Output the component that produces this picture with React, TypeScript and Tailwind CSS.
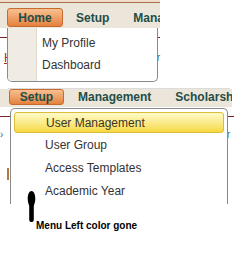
const TOP_ITEMS = ['My Profile', 'Dashboard'];
const SETUP_ITEMS = ['User Group', 'Access Templates', 'Academic Year'];

function NavButton({ label, w }: { label: string; w: string }) {
  return (
    <div
      className={`${w} h-full shrink-0 flex items-center justify-center rounded-[3px] border border-[#c56a31] bg-linear-to-b from-[#f8c08f] to-[#e4813c] text-[#1f4d48] font-bold text-[12px]`}
    >
      {label}
    </div>
  );
}

export default function App() {
  return (
    <div className="w-[244px] h-[254px] bg-white overflow-hidden font-['Liberation_Sans',Arial,sans-serif]">
      {/* First capture: Home menu open */}
      <div className="w-[160px] h-[2px] bg-[#f0dcc8]" />
      <div className="w-[160px] h-px bg-[#a8704f]" />
      <div className="w-[160px] h-[25px] bg-[#ebe6d9] pt-[5px] pl-[7px] flex items-start overflow-hidden">
        <div className="h-[19px] flex items-center">
          <NavButton label="Home" w="w-[56px]" />
          <span className="ml-[13px] text-[12px] font-bold text-[#1f4d48]">Setup</span>
          <span className="ml-[24px] text-[12px] font-bold text-[#1f4d48] whitespace-nowrap">Mana</span>
        </div>
      </div>
      <div className="relative w-[160px] h-[60px] flex flex-col">
        <div className="mt-[9px] h-px bg-[#7a2424]" />
        <div className="mt-[14px] flex justify-between items-center leading-none">
          <span className="pl-[4px] text-[12px] text-[#b22a2a] underline">Home</span>
          <span className="text-[10px] text-[#2d6b78]">r</span>
        </div>

        <div className="absolute left-[7px] top-0 w-[151px] h-[54px] bg-white border border-t-0 border-[#8a8a8a] rounded-b-[5px] flex overflow-hidden">
          <div className="w-[29px] h-full bg-[#f1ece3] border-r border-[#ddd6ca]" />
          <div className="flex flex-col pt-[4px]">
            {TOP_ITEMS.map((t) => (
              <div key={t} className="h-[22px] flex items-center pl-[5px] text-[12px] text-[#333]">
                {t}
              </div>
            ))}
          </div>
        </div>
      </div>

      {/* Second capture: Setup menu open */}
      <div className="ml-[8px] w-[222px] h-px bg-[#dcdcdc]" />
      <div className="w-[232px] h-[18px] bg-[#ebe6d9] pl-[9px] flex items-start overflow-hidden">
        <div className="h-[16px] flex items-center">
          <NavButton label="Setup" w="w-[55px]" />
          <span className="ml-[14px] text-[12px] font-bold text-[#1f4d48]">Management</span>
          <span className="ml-[24px] text-[12px] font-bold text-[#1f4d48] whitespace-nowrap">Scholarshi</span>
        </div>
      </div>
      <div className="relative w-[234px] h-[97px] flex flex-col overflow-hidden">
        <div className="mt-[9px] h-px bg-[#7a2424]" />
        <div className="mt-[13px] flex justify-between leading-none">
          <span className="text-[10px] text-[#2d6b78]">›</span>
          <span className="text-[10px] text-[#2d6b78] mr-[4px]">r</span>
        </div>
        <div className="mt-[28px] ml-[7px] w-[2px] h-[12px] bg-[#b07a3e]" />

        <div className="absolute left-[10px] top-px w-[218px] h-[97px] bg-white border border-b-0 border-[#8a8a8a] rounded-t-[5px] pt-[3px] px-[3px]">
          <div className="h-[21px] flex items-center pl-[31px] rounded-[3px] border border-[#dcbc3a] bg-linear-to-b from-[#fffbc6] to-[#f6d93a] text-[12px] text-[#3d3420]">
            User Management
          </div>
          {SETUP_ITEMS.map((t) => (
            <div key={t} className="h-[23px] flex items-center pl-[31px] text-[12px] text-[#333]">
              {t}
            </div>
          ))}
        </div>
      </div>

      {/* Annotation */}
      <div className="relative h-[51px]">
        <svg className="absolute left-[27px] -top-[13px]" width="9" height="31" viewBox="0 0 9 31">
          <path d="M4.5 0 C7.2 0 8.3 4 8.3 8 C8.3 11 7.2 13 6.8 15 L6.8 28.5 C6.8 30.5 5.8 31 4.5 31 C3.2 31 2.2 30.5 2.2 28.5 L2.2 15 C1.8 13 0.7 11 0.7 8 C0.7 4 1.8 0 4.5 0 Z" fill="#000" />
        </svg>
        <div className="pl-[36px] pt-[17px] text-[10px] font-bold text-black leading-none">
          Menu Left color gone
        </div>
      </div>
    </div>
  );
}
